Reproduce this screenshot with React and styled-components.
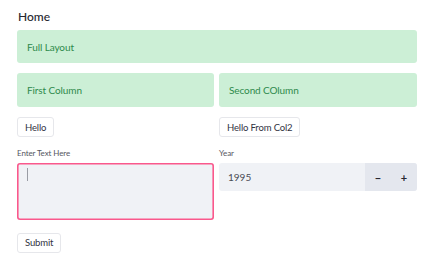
import React from "react";
import styled, { createGlobalStyle } from "styled-components";

const GlobalStyle = createGlobalStyle`
  body {
    margin: 0;
    background: #ffffff;
    font-family: "Source Sans Pro", Lato, "Noto Sans", sans-serif;
    color: #31333f;
  }
`;

const Page = styled.div`
  width: 400px;
  padding: 9px 22px 12px 17px;
  display: flex;
  flex-direction: column;
`;

const Title = styled.div`
  font-size: 12px;
  font-weight: 500;
  line-height: 16px;
  color: #262730;
  padding-left: 1px;
  margin-bottom: 5px;
`;

const Alert = styled.div`
  align-self: stretch;
  display: flex;
  align-items: center;
  height: ${props => props.h || 33}px;
  padding: 0 10px;
  background: #ccefd6;
  border-radius: 3px;
  color: #2e8a4c;
  font-size: 10px;
  letter-spacing: -0.1px;
  box-sizing: border-box;
`;

const Columns = styled.div`
  display: grid;
  grid-template-columns: 197px 198px;
  column-gap: 5px;
  margin-top: 10px;
`;

const Column = styled.div`
  display: flex;
  flex-direction: column;
  align-items: flex-start;
  gap: 10px;
`;

const Button = styled.button`
  height: 20px;
  padding: 0 7px;
  background: #ffffff;
  border: 1px solid #e6e7eb;
  border-radius: 3px;
  font-family: inherit;
  font-size: 9.5px;
  letter-spacing: -0.15px;
  color: #31333f;
  cursor: pointer;
  box-sizing: border-box;
`;

const Field = styled.div`
  align-self: stretch;
  margin-top: 1px;
  display: flex;
  flex-direction: column;
  gap: 5px;
`;

const Label = styled.div`
  font-size: 8px;
  line-height: 10px;
  color: #555761;
  letter-spacing: -0.1px;
`;

const TextArea = styled.div`
  height: 57px;
  background-color: #f0f2f6;
  border-radius: 3px;
  box-shadow: inset 0 0 0 1.6px rgb(250, 88, 140);
  box-sizing: border-box;
  padding: 5px 10px;
`;

const Caret = styled.span`
  display: block;
  width: 1px;
  height: 13px;
  background: #9a9ca4;
`;

const NumberInput = styled.div`
  height: 28px;
  display: flex;
  background: #f0f2f6;
  border-radius: 3px;
  overflow: hidden;
`;

const NumberValue = styled.div`
  flex: 1;
  display: flex;
  align-items: center;
  padding-left: 9px;
  font-size: 10px;
  color: #4a4c55;
`;

const Step = styled.div`
  width: 26px;
  display: flex;
  align-items: center;
  justify-content: center;
  background: #e4e7ee;
  font-size: 11px;
  font-weight: 700;
  color: #262730;
`;

const SubmitRow = styled.div`
  margin-top: 10px;
`;

export default function App() {
  return (
    <>
      <GlobalStyle />
      <Page>
        <Title>Home</Title>
        <Alert>Full Layout</Alert>
        <Columns>
          <Column>
            <Alert h={34}>First Column</Alert>
            <Button>Hello</Button>
            <Field>
              <Label>Enter Text Here</Label>
              <TextArea>
                <Caret />
              </TextArea>
            </Field>
          </Column>
          <Column>
            <Alert h={34}>Second COlumn</Alert>
            <Button>Hello From Col2</Button>
            <Field>
              <Label>Year</Label>
              <NumberInput>
                <NumberValue>1995</NumberValue>
                <Step>−</Step>
                <Step>+</Step>
              </NumberInput>
            </Field>
          </Column>
        </Columns>
        <SubmitRow>
          <Button>Submit</Button>
        </SubmitRow>
      </Page>
    </>
  );
}
